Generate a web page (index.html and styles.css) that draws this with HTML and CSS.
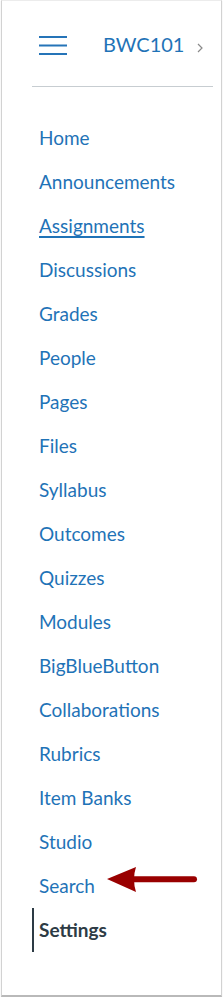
FILE: index.html
```html
<!DOCTYPE html>
<html>
<head>
<meta charset="utf-8">
<link rel="stylesheet" href="styles.css">
</head>
<body>
<div class="frame">
  <div class="header">
    <svg class="burger" width="28" height="19" viewBox="0 0 28 19"><rect x="0" y="0" width="28" height="2" fill="#2574b8"/><rect x="0" y="8.5" width="28" height="2" fill="#2574b8"/><rect x="0" y="17" width="28" height="2" fill="#2574b8"/></svg>
    <span class="title">BWC101</span>
    <svg class="chev" width="6" height="10" viewBox="0 0 6 10"><polyline points="1,1 5,5 1,9" fill="none" stroke="#8a8a8a" stroke-width="1.2"/></svg>
  </div>
  <div class="divider"></div>
  <ul class="nav">
    <li class="item">Home</li>
    <li class="item">Announcements</li>
    <li class="item under">Assignments</li>
    <li class="item">Discussions</li>
    <li class="item">Grades</li>
    <li class="item">People</li>
    <li class="item">Pages</li>
    <li class="item">Files</li>
    <li class="item">Syllabus</li>
    <li class="item">Outcomes</li>
    <li class="item">Quizzes</li>
    <li class="item">Modules</li>
    <li class="item">BigBlueButton</li>
    <li class="item">Collaborations</li>
    <li class="item">Rubrics</li>
    <li class="item">Item Banks</li>
    <li class="item">Studio</li>
    <li class="item search">Search
      <svg class="arrow" width="100" height="30" viewBox="100 868 100 30"><path d="M107 883 L136 871 Q132 883 136 896 Z" fill="#990000"/><line x1="133" y1="883.3" x2="194" y2="883.3" stroke="#990000" stroke-width="6" stroke-linecap="round"/></svg>
    </li>
    <li class="item active">Settings</li>
  </ul>
</div>
</body>
</html>
```
FILE: styles.css
```css
html, body {
  margin: 0;
  padding: 0;
  background: #ffffff;
}
body {
  font-family: Lato, "Open Sans", sans-serif;
}
.frame {
  margin-left: 1px;
  width: 219px;
  height: 994px;
  border-top: 1px solid #ececec;
  border-left: 1px solid #d2d2d2;
  border-right: 1px solid #d2d2d2;
  border-bottom: 2px solid #b9b9b9;
  box-shadow: 0 1px 1px rgba(0,0,0,0.15);
  background: #fff;
}
.header {
  display: flex;
  align-items: flex-start;
  height: 50px;
  padding: 35px 0 0 37px;
}
.burger {
  display: block;
  flex: none;
}
.title {
  margin-left: 36px;
  margin-top: -2px;
  font-size: 20px;
  line-height: 20px;
  color: #1f73b7;
}
.chev {
  display: block;
  margin-left: 13px;
  margin-top: 7px;
}
.divider {
  margin-left: 30px;
  width: 181px;
  height: 1px;
  background: #c7cdd1;
}
.nav {
  list-style: none;
  margin: 29px 0 0 0;
  padding: 0;
}
.item {
  position: relative;
  margin-left: 30px;
  padding-left: 7px;
  height: 44px;
  line-height: 44px;
  font-size: 19px;
  color: #1f73b7;
}
.under {
  text-decoration: underline;
  text-underline-offset: 3px;
  text-decoration-thickness: 1.5px;
}
.active {
  border-left: 2px solid #2d3b45;
  padding-left: 5px;
  color: #2d3b45;
  font-weight: bold;
}
.arrow {
  position: absolute;
  left: 68px;
  top: 0px;
}
```
